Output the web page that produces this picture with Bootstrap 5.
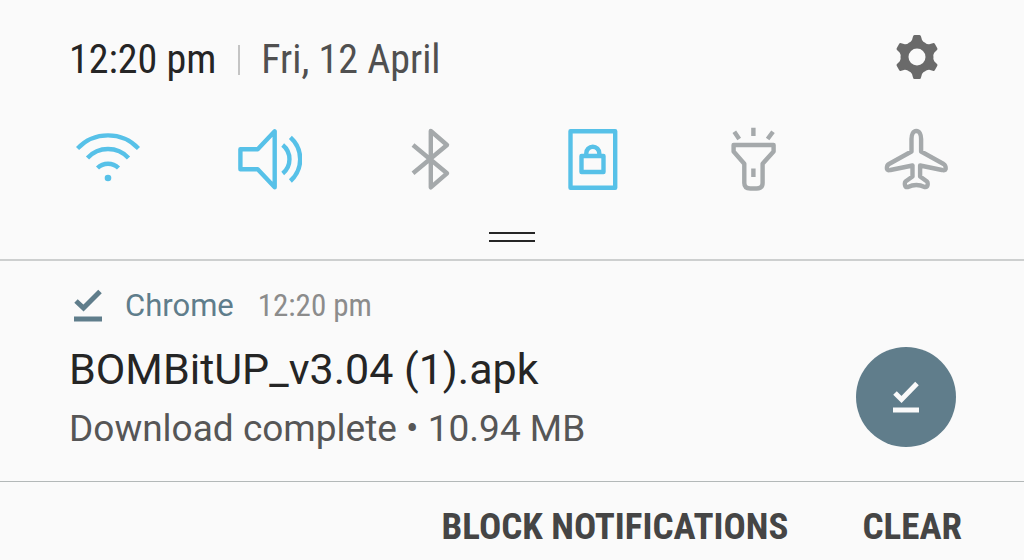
<!DOCTYPE html>
<html lang="en">
<head>
<meta charset="utf-8">
<meta name="viewport" content="width=device-width, initial-scale=1">
<title>Notifications</title>
<link href="https://cdn.jsdelivr.net/npm/bootstrap@5.3.0/dist/css/bootstrap.min.css" rel="stylesheet">
<style>
body { background: #fafafa; color: #252525; font-family: Roboto, sans-serif; overflow-x: hidden; }
.condensed { font-family: "Roboto Condensed", "Liberation Sans Narrow", Roboto, sans-serif; }
.status { padding: 27px 69px 0; font-size: 40px; line-height: 54px; }
.status .clock { padding-top: 6px; }
.status .date { color: #505050; border-left: 2px solid #c4c4c4; padding-left: 21px; margin-left: 22px; line-height: 30px; }
.plain { background: none; border: 0; padding: 0; color: inherit; display: block; }
.plain svg { display: block; }
.gear { margin-right: 16px; color: #6a6a6a; }
.toggles { padding: 40px 76px 0; }
.toggles svg { fill: none; stroke: currentColor; stroke-width: 4.400; stroke-linejoin: round; }
.toggles .plain { color: #a5a9ab; }
.toggles .plain.on { color: #57c1e8; }
.handle { width: 46px; height: 10px; border: solid #252525; border-width: 2px 0; margin: 41px auto 17px; }
.panel { border-bottom: 2px solid #cdcfcf; }
.notice { padding: 25px 68px 0 69px; min-height: 221px; border-bottom: 1px solid #b3b8b8; }
.source { font-size: 31px; line-height: 40px; color: #5f7d8b; }
.source .ago { color: #8c8c8c; margin-left: 24px; }
.source svg { margin: 0 22px 0 5px; }
.headline { font-size: 43px; line-height: 50px; margin: 18px 0 0; font-weight: 400; }
.detail { font-size: 37px; line-height: 44px; margin: 13px 0 0; color: #565656; }
.disc { width: 100px; height: 100px; background: #607d8b; color: #fafafa; margin-top: 61px; }
.actions { padding: 19px 62px 0; gap: 74px; font-size: 37px; line-height: 52px; color: #454545; }
.actions .plain { font-weight: 700; }
</style>
</head>
<body>
<header class="panel">
  <div class="status condensed d-flex justify-content-between align-items-center">
    <div class="clock d-flex align-items-center text-nowrap"><span>12:20 pm</span><span class="date">Fri, 12 April</span></div>
    <button class="plain gear" type="button" aria-label="Settings">
      <svg width="44" height="44" viewBox="-22 -22 44 44" fill="currentColor">
        <defs><path id="tooth" d="M-4-20.500Q-3.800-22-2.500-22H2.500Q3.800-22 4-20.500L5-17Q6-15 8.500-14L0 0L-8.500-14Q-6-15-5-17Z"/></defs>
        <circle r="14"/>
        <use href="#tooth"/><use href="#tooth" transform="rotate(60)"/><use href="#tooth" transform="rotate(120)"/><use href="#tooth" transform="rotate(180)"/><use href="#tooth" transform="rotate(240)"/><use href="#tooth" transform="rotate(300)"/>
        <circle r="8.500" fill="#fafafa"/>
      </svg>
    </button>
  </div>
  <div class="toggles d-flex justify-content-between">
    <button class="plain on" type="button" aria-label="Wi-Fi"><svg width="64" height="64" viewBox="0 0 64 64"><path d="M1.500 21.500A42 42 0 0 1 62.500 21.500M11.500 31A28 28 0 0 1 52.500 31M21.500 41A15 15 0 0 1 42.500 41"/><circle cx="32" cy="51" r="3.300" fill="currentColor" stroke="none"/></svg></button>
    <button class="plain on" type="button" aria-label="Sound"><svg width="64" height="64" viewBox="0 0 64 64"><path d="M2.400 22.300H19.700L36.700 4.300V60.300L19.700 42.300H2.400ZM44.700 18A18.400 18.400 0 0 1 44.700 46.500M52.400 10.300A29.300 29.300 0 0 1 52.400 54"/></svg></button>
    <button class="plain" type="button" aria-label="Bluetooth"><svg width="64" height="64" viewBox="0 0 64 64"><path d="M14 18L48 46.300L31.800 60.300V4L48 18L14 46.300"/></svg></button>
    <button class="plain on" type="button" aria-label="Screen lock"><svg width="64" height="64" viewBox="0 0 64 64"><path d="M9.500 4.300H54.200V60.700H9.500ZM20.500 29H42.500V45H20.500ZM25.300 29V26.200A6.500 6.500 0 0 1 38.300 26.200V29"/></svg></button>
    <button class="plain" type="button" aria-label="Flashlight"><svg width="64" height="64" viewBox="0 0 64 64"><path d="M11.600 18H51.600V24.500L40.600 36.700V56Q40.600 61.500 34.500 61.500H28.400Q22.300 61.500 22.300 56V36.700L11.600 24.500ZM31.400 41.500V50M31.400 .8V9M12.300 4.700L17.200 12M51 4.700L45.600 12"/></svg></button>
    <button class="plain" type="button" aria-label="Airplane mode"><svg width="64" height="64" viewBox="0 0 64 64"><path d="M32.300 4C29 4 27.500 8 27.500 12V24.500L5 37Q2.500 38.500 3 42Q3.500 44 6.500 43L28.500 38.500V49.500L21.500 54.500Q20.500 55.500 21 58Q21.500 60.500 24 60Q28 58 32.300 58Q36.600 58 40.600 60Q43 60.500 43.600 58Q44 55.500 43 54.500L36.100 49.500V38.500L58 43Q61 44 61.600 42Q62 38.500 59.600 37L37.100 24.500V12C37.100 8 35.600 4 32.300 4Z"/></svg></button>
  </div>
  <div class="handle"></div>
</header>
<main>
  <article class="notice d-flex justify-content-between align-items-start">
    <div>
      <div class="source d-flex align-items-center">
        <svg width="29" height="34" viewBox="0 0 29 34" fill="none" stroke="currentColor" stroke-width="5"><path d="M2 12L9.500 19L26 2.500M0 30H28"/></svg>
        <span>Chrome</span><span class="ago condensed">12:20 pm</span>
      </div>
      <h1 class="headline">BOMBitUP_v3.04 (1).apk</h1>
      <p class="detail">Download complete • 10.94 MB</p>
    </div>
    <div class="disc rounded-circle d-flex align-items-center justify-content-center flex-shrink-0">
      <svg width="26" height="32" viewBox="0 0 26 32" fill="none" stroke="currentColor" stroke-width="5"><path d="M2 12L8.500 18.500L24 2.500M0 29H26"/></svg>
    </div>
  </article>
  <div class="actions condensed d-flex justify-content-end text-nowrap">
    <button class="plain" type="button">BLOCK NOTIFICATIONS</button>
    <button class="plain" type="button">CLEAR</button>
  </div>
</main>
<script src="https://cdn.jsdelivr.net/npm/bootstrap@5.3.0/dist/js/bootstrap.bundle.min.js"></script>
</body>
</html>
